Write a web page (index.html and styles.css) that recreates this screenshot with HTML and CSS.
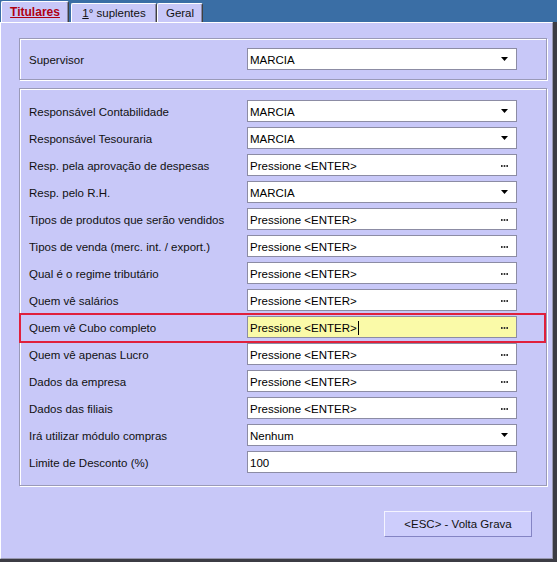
FILE: index.html
```html
<!DOCTYPE html>
<html lang="pt-BR">
<head>
<meta charset="utf-8">
<title>Titulares</title>
<link rel="stylesheet" href="styles.css">
</head>
<body>
<div class="window">
  <div class="tabs">
    <div class="tab tab-active"><span class="ul">Titulares</span></div>
    <div class="tab tab-2"><span class="ul-plain">1</span>° suplentes</div>
    <div class="tab tab-3">Geral</div>
  </div>
  <div class="frame">
    <div class="panel">
      <div class="group group-top">
        <div class="row">
          <span class="label">Supervisor</span>
          <div class="field"><span>MARCIA</span><svg class="arrow" width="7" height="4" viewBox="0 0 7 4"><polygon points="0,0 7,0 3.5,4" fill="#000"/></svg></div>
        </div>
      </div>
      <div class="group group-main">
        <div class="row">
          <span class="label">Responsável Contabilidade</span>
          <div class="field"><span>MARCIA</span><svg class="arrow" width="7" height="4" viewBox="0 0 7 4"><polygon points="0,0 7,0 3.5,4" fill="#000"/></svg></div>
        </div>
        <div class="row">
          <span class="label">Responsável Tesouraria</span>
          <div class="field"><span>MARCIA</span><svg class="arrow" width="7" height="4" viewBox="0 0 7 4"><polygon points="0,0 7,0 3.5,4" fill="#000"/></svg></div>
        </div>
        <div class="row">
          <span class="label">Resp. pela aprovação de despesas</span>
          <div class="field"><span>Pressione &lt;ENTER&gt;</span><svg class="dots" width="7" height="2" viewBox="0 0 7 2"><rect x="0" y="0" width="1.6" height="2" fill="#333"/><rect x="2.7" y="0" width="1.6" height="2" fill="#333"/><rect x="5.4" y="0" width="1.6" height="2" fill="#333"/></svg></div>
        </div>
        <div class="row">
          <span class="label">Resp. pelo R.H.</span>
          <div class="field"><span>MARCIA</span><svg class="arrow" width="7" height="4" viewBox="0 0 7 4"><polygon points="0,0 7,0 3.5,4" fill="#000"/></svg></div>
        </div>
        <div class="row">
          <span class="label">Tipos de produtos que serão vendidos</span>
          <div class="field"><span>Pressione &lt;ENTER&gt;</span><svg class="dots" width="7" height="2" viewBox="0 0 7 2"><rect x="0" y="0" width="1.6" height="2" fill="#333"/><rect x="2.7" y="0" width="1.6" height="2" fill="#333"/><rect x="5.4" y="0" width="1.6" height="2" fill="#333"/></svg></div>
        </div>
        <div class="row">
          <span class="label">Tipos de venda (merc. int. / export.)</span>
          <div class="field"><span>Pressione &lt;ENTER&gt;</span><svg class="dots" width="7" height="2" viewBox="0 0 7 2"><rect x="0" y="0" width="1.6" height="2" fill="#333"/><rect x="2.7" y="0" width="1.6" height="2" fill="#333"/><rect x="5.4" y="0" width="1.6" height="2" fill="#333"/></svg></div>
        </div>
        <div class="row">
          <span class="label">Qual é o regime tributário</span>
          <div class="field"><span>Pressione &lt;ENTER&gt;</span><svg class="dots" width="7" height="2" viewBox="0 0 7 2"><rect x="0" y="0" width="1.6" height="2" fill="#333"/><rect x="2.7" y="0" width="1.6" height="2" fill="#333"/><rect x="5.4" y="0" width="1.6" height="2" fill="#333"/></svg></div>
        </div>
        <div class="row">
          <span class="label">Quem vê salários</span>
          <div class="field"><span>Pressione &lt;ENTER&gt;</span><svg class="dots" width="7" height="2" viewBox="0 0 7 2"><rect x="0" y="0" width="1.6" height="2" fill="#333"/><rect x="2.7" y="0" width="1.6" height="2" fill="#333"/><rect x="5.4" y="0" width="1.6" height="2" fill="#333"/></svg></div>
        </div>
        <div class="row">
          <div class="highlight"></div>
          <span class="label">Quem vê Cubo completo</span>
          <div class="field field-focus"><span class="text-caret">Pressione &lt;ENTER&gt;<i class="caret"></i></span><svg class="dots" width="7" height="2" viewBox="0 0 7 2"><rect x="0" y="0" width="1.6" height="2" fill="#333"/><rect x="2.7" y="0" width="1.6" height="2" fill="#333"/><rect x="5.4" y="0" width="1.6" height="2" fill="#333"/></svg></div>
        </div>
        <div class="row">
          <span class="label">Quem vê apenas Lucro</span>
          <div class="field"><span>Pressione &lt;ENTER&gt;</span><svg class="dots" width="7" height="2" viewBox="0 0 7 2"><rect x="0" y="0" width="1.6" height="2" fill="#333"/><rect x="2.7" y="0" width="1.6" height="2" fill="#333"/><rect x="5.4" y="0" width="1.6" height="2" fill="#333"/></svg></div>
        </div>
        <div class="row">
          <span class="label">Dados da empresa</span>
          <div class="field"><span>Pressione &lt;ENTER&gt;</span><svg class="dots" width="7" height="2" viewBox="0 0 7 2"><rect x="0" y="0" width="1.6" height="2" fill="#333"/><rect x="2.7" y="0" width="1.6" height="2" fill="#333"/><rect x="5.4" y="0" width="1.6" height="2" fill="#333"/></svg></div>
        </div>
        <div class="row">
          <span class="label">Dados das filiais</span>
          <div class="field"><span>Pressione &lt;ENTER&gt;</span><svg class="dots" width="7" height="2" viewBox="0 0 7 2"><rect x="0" y="0" width="1.6" height="2" fill="#333"/><rect x="2.7" y="0" width="1.6" height="2" fill="#333"/><rect x="5.4" y="0" width="1.6" height="2" fill="#333"/></svg></div>
        </div>
        <div class="row">
          <span class="label">Irá utilizar módulo compras</span>
          <div class="field"><span>Nenhum</span><svg class="arrow" width="7" height="4" viewBox="0 0 7 4"><polygon points="0,0 7,0 3.5,4" fill="#000"/></svg></div>
        </div>
        <div class="row">
          <span class="label">Limite de Desconto (%)</span>
          <div class="field"><span>100</span></div>
        </div>
      </div>
      <div class="actions">
        <button class="btn">&lt;ESC&gt; - Volta Grava</button>
      </div>
    </div>
  </div>
</div>
</body>
</html>
```
FILE: styles.css
```css
html, body {
  margin: 0;
  padding: 0;
}
body {
  background: #3a6ea5;
  font-family: "Liberation Sans", Arial, sans-serif;
  font-size: 11.5px;
  color: #111;
}
.window {
  width: 557px;
  height: 562px;
  display: flex;
  flex-direction: column;
}
.tabs {
  height: 22px;
  display: flex;
  align-items: flex-end;
  padding-left: 1px;
  box-sizing: border-box;
}
.tab {
  box-sizing: border-box;
  height: 19px;
  background: #c8c8f8;
  border-top: 1px solid #fff;
  border-left: 1px solid #fff;
  border-right: 1px solid #404040;
  box-shadow: inset -1px 0 0 #8a8aa8;
  border-radius: 2px 2px 0 0;
  display: flex;
  align-items: center;
  justify-content: center;
  padding-bottom: 1px;
}
.tab-active {
  width: 68px;
  height: 21px;
  font-weight: bold;
  color: #b00010;
  font-size: 12px;
}
.tab-2 {
  width: 86px;
  margin-left: 2px;
}
.tab-3 {
  width: 46px;
}
.ul, .ul-plain {
  text-decoration: underline;
}
.frame {
  flex: 1;
  background: #3c3c44;
  padding: 0 4px 3px 0;
  box-sizing: border-box;
}
.panel {
  height: 100%;
  box-sizing: border-box;
  background: #c8c8f8;
  border-top: 1px solid #fff;
  border-left: 1px solid #fff;
  border-right: 1px solid #9898b0;
  border-bottom: 1px solid #9898b0;
  padding: 15px 5px 0 18px;
  display: flex;
  flex-direction: column;
}
.group {
  border: 1px solid #9a9ab8;
  box-shadow: inset 1px 1px 0 #fff, 1px 1px 0 #fff;
}
.group-top {
  height: 42px;
  box-sizing: border-box;
  padding: 0 29px 0 9px;
  display: flex;
  flex-direction: column;
  justify-content: center;
  margin-bottom: 8px;
}
.group-main {
  padding: 11px 29px 12px 9px;
  display: flex;
  flex-direction: column;
  gap: 5px;
}
.row {
  position: relative;
  height: 22px;
  display: flex;
  align-items: center;
}
.label {
  flex: 1;
  padding-top: 1px;
}
.field {
  position: relative;
  width: 270px;
  height: 22px;
  box-sizing: border-box;
  border: 1px solid #8c8ca4;
  background: #fff;
  display: flex;
  align-items: center;
  justify-content: space-between;
  padding: 1px 8px 0 2px;
  color: #000;
}
.field-focus {
  background: #fafaa8;
}
.text-caret {
  display: flex;
  align-items: center;
}
.caret {
  display: inline-block;
  width: 1px;
  height: 14px;
  background: #000;
  margin-left: 1px;
}
.arrow {
  display: block;
  margin-top: -1px;
}
.dots {
  display: block;
  margin-top: 1px;
}
.highlight {
  position: absolute;
  left: -10px;
  right: -29px;
  top: -3px;
  height: 30px;
  box-sizing: border-box;
  border: 2px solid #e0203c;
  pointer-events: none;
  z-index: 1;
}
.actions {
  display: flex;
  justify-content: flex-end;
  margin-top: 25px;
  padding-right: 15px;
}
.btn {
  width: 148px;
  height: 26px;
  box-sizing: border-box;
  background: #cdcdfc;
  border: 1px solid;
  border-color: #f4f4ff #8484c4 #8484c4 #f4f4ff;
  font-family: "Liberation Sans", Arial, sans-serif;
  font-size: 11.5px;
  color: #111;
  padding: 0;
}
```
